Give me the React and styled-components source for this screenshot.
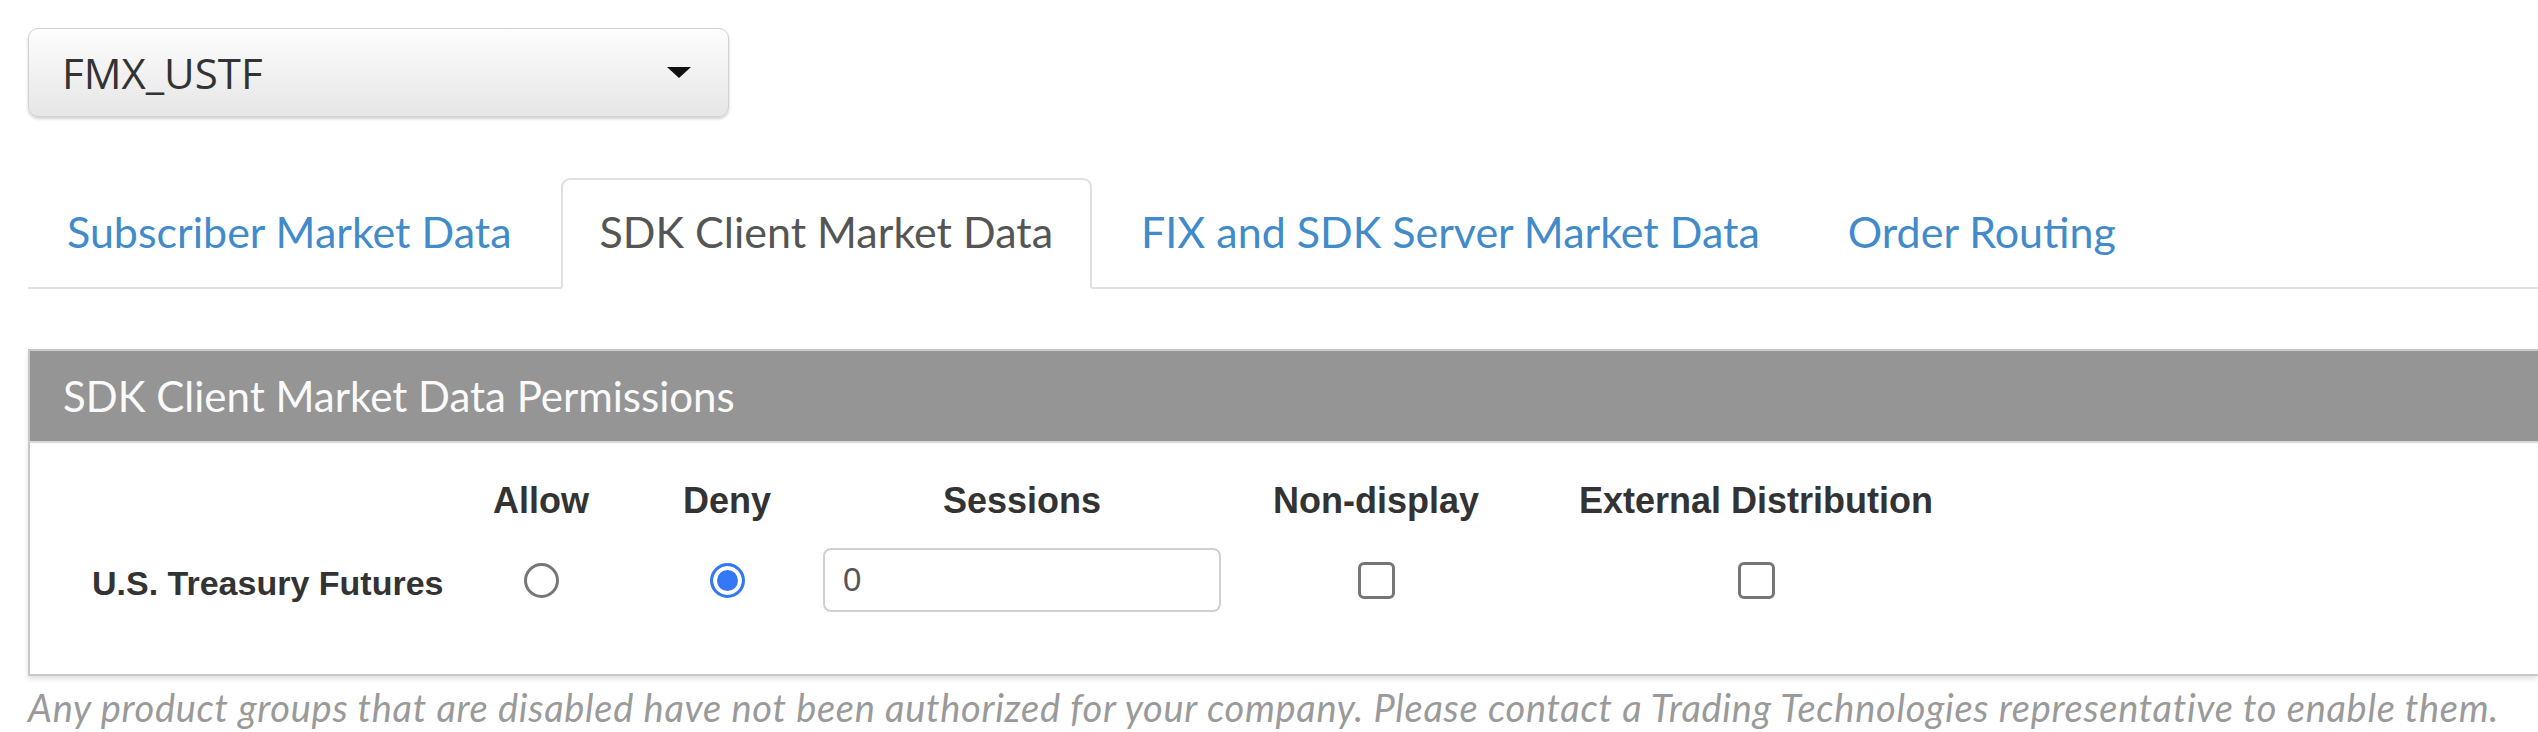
import React from "react";
import styled, { createGlobalStyle } from "styled-components";

const Global = createGlobalStyle`
  html, body { margin: 0; padding: 0; background: #fff; overflow: hidden; }
  body { font-family: "Lato", "Open Sans", sans-serif; }
`;

const Page = styled.div`
  padding: 28px 0 0 28px;
  width: 2510px;
`;

const Select = styled.div`
  box-sizing: border-box;
  width: 701px;
  height: 89px;
  display: flex;
  align-items: center;
  justify-content: space-between;
  padding: 0 37px 0 33px;
  border: 1px solid #d2d2d2;
  border-radius: 10px;
  background: linear-gradient(#fdfdfd, #e6e6e6);
  box-shadow: 0 2px 3px rgba(0, 0, 0, 0.18);
  font-family: "Open Sans", sans-serif;
  font-size: 42px;
  color: #333;
`;

const Caret = styled.span`
  width: 0;
  height: 0;
  border-left: 12px solid transparent;
  border-right: 12px solid transparent;
  border-top: 11px solid #111;
`;

const Tabs = styled.nav`
  margin-top: 61px;
  display: flex;
  align-items: flex-end;
  border-bottom: 2px solid #e0e0e0;
  height: 109px;
`;

const Tab = styled.div`
  box-sizing: border-box;
  height: 111px;
  margin-bottom: -2px;
  margin-right: 10px;
  padding: 0 37px 4px;
  display: flex;
  align-items: center;
  font-family: "Lato", sans-serif;
  font-size: 43px;
  color: ${(p) => (p.$active ? "#555" : "#428bca")};
  background: ${(p) => (p.$active ? "#fff" : "transparent")};
  border: 2px solid ${(p) => (p.$active ? "#e0e0e0" : "transparent")};
  border-bottom-color: ${(p) => (p.$active ? "#fff" : "transparent")};
  border-radius: 9px 9px 0 0;
`;

const Panel = styled.section`
  margin-top: 60px;
  border: 2px solid #c8c8c8;
  border-right: none;
  box-shadow: 0 3px 5px rgba(0, 0, 0, 0.12);
`;

const PanelHeader = styled.header`
  height: 90px;
  display: flex;
  align-items: center;
  padding-left: 33px;
  background: #959595;
  border-bottom: 2px solid #d8d8d8;
  font-family: "Lato", sans-serif;
  font-size: 42px;
  color: #fafafa;
`;

const Grid = styled.div`
  display: grid;
  grid-template-columns: 356px 186px 186px 404px 304px 456px;
  grid-template-rows: 40px 64px;
  row-gap: 27px;
  align-items: center;
  padding: 38px 0 62px 62px;
`;

const ColHead = styled.div`
  text-align: center;
  font-family: "Liberation Sans", Arial, sans-serif;
  font-weight: bold;
  font-size: 36px;
  color: #333;
  line-height: 40px;
`;

const RowLabel = styled.div`
  font-family: "Liberation Sans", Arial, sans-serif;
  font-weight: bold;
  font-size: 34px;
  color: #333;
  padding-top: 6px;
`;

const Cell = styled.div`
  display: flex;
  justify-content: center;
  align-items: center;
`;

const Radio = styled.input.attrs({ type: "radio" })`
  appearance: none;
  margin: 0;
  box-sizing: border-box;
  width: 35px;
  height: 35px;
  border-radius: 50%;
  border: 3px solid ${(p) => (p.checked ? "#3478f6" : "#767676")};
  background: ${(p) => (p.checked ? "#3478f6" : "#fff")};
  box-shadow: ${(p) => (p.checked ? "inset 0 0 0 4px #fff" : "none")};
`;

const Check = styled.input.attrs({ type: "checkbox" })`
  appearance: none;
  margin: 0;
  box-sizing: border-box;
  width: 37px;
  height: 37px;
  border-radius: 6px;
  border: 3px solid #767676;
  background: #fff;
`;

const TextBox = styled.input`
  box-sizing: border-box;
  width: 398px;
  height: 64px;
  padding: 0 18px;
  border: 2px solid #d0d0d0;
  border-radius: 8px;
  font-family: "Liberation Sans", Arial, sans-serif;
  font-size: 33px;
  color: #555;
  outline: none;
`;

const Note = styled.p`
  margin: 8px 0 0;
  font-family: "Lato", sans-serif;
  font-style: italic;
  font-size: 38px;
  letter-spacing: 0.7px;
  color: #9a9a9a;
  white-space: nowrap;
`;

const tabs = [
  "Subscriber Market Data",
  "SDK Client Market Data",
  "FIX and SDK Server Market Data",
  "Order Routing",
];

export default function App() {
  return (
    <>
      <Global />
      <Page>
        <Select>
          <span>FMX_USTF</span>
          <Caret />
        </Select>
        <Tabs>
          {tabs.map((t, i) => (
            <Tab key={t} $active={i === 1}>
              {t}
            </Tab>
          ))}
        </Tabs>
        <Panel>
          <PanelHeader>SDK Client Market Data Permissions</PanelHeader>
          <Grid>
            <div />
            <ColHead>Allow</ColHead>
            <ColHead>Deny</ColHead>
            <ColHead>Sessions</ColHead>
            <ColHead>Non-display</ColHead>
            <ColHead>External Distribution</ColHead>
            <RowLabel>U.S. Treasury Futures</RowLabel>
            <Cell>
              <Radio name="perm" checked={false} readOnly />
            </Cell>
            <Cell>
              <Radio name="perm" checked readOnly />
            </Cell>
            <Cell>
              <TextBox defaultValue="0" />
            </Cell>
            <Cell>
              <Check />
            </Cell>
            <Cell>
              <Check />
            </Cell>
          </Grid>
        </Panel>
        <Note>
          Any product groups that are disabled have not been authorized for your company. Please contact a Trading Technologies representative to enable them.
        </Note>
      </Page>
    </>
  );
}
